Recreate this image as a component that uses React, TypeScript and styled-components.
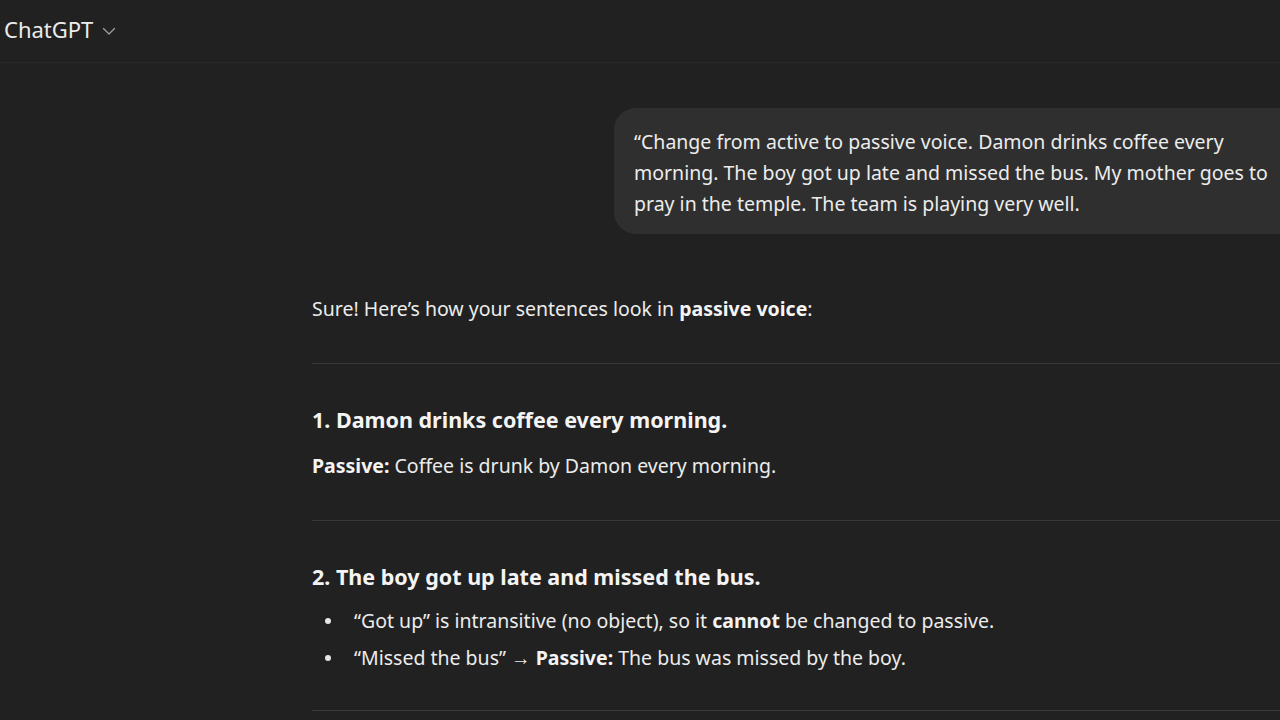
import styled, { createGlobalStyle } from 'styled-components'

const GlobalStyle = createGlobalStyle`
    html, body {
        margin: 0;
        padding: 0;
        background: #212121;
        overflow: hidden;
    }
    body {
        font-family: "Noto Sans", "Open Sans", sans-serif;
        color: #ececec;
    }
`

const Page = styled.div`
    width: 1280px;
    height: 720px;
    overflow: hidden;
    display: flex;
    flex-direction: column;
`
const Header = styled.div`
    height: 63px;
    flex-shrink: 0;
    display: flex;
    align-items: center;
    gap: 8px;
    padding: 0 4px;
    border-bottom: 1px solid #2a2a2a;
    box-sizing: border-box;
`
const Brand = styled.span`
    font-size: 22px;
    color: #ececec;
    margin-top: -4px;
`
const Chevron = styled.svg`
    width: 16px;
    height: 16px;
    margin-top: -1px;
    color: #a0a0a0;
`
const Thread = styled.div`
    width: 1000px;
    margin-left: 312px;
    padding-top: 45px;
    display: flex;
    flex-direction: column;
`
const UserRow = styled.div`
    display: flex;
    justify-content: flex-end;
    margin-bottom: 59px;
`
const Bubble = styled.div`
    max-width: 698px;
    box-sizing: border-box;
    background: #2f2f2f;
    border-radius: 22px;
    padding: 18px 20px 15px;
    font-size: 19.5px;
    line-height: 31px;
    color: #ececec;
`
const Para = styled.p<{ $gap?: number }>`
    margin: 0;
    font-size: 19.5px;
    line-height: 32px;
    color: #ececec;
    margin-bottom: ${p => p.$gap ?? 0}px;
`
const Strong = styled.b`
    font-weight: 700;
    color: #f4f4f4;
`
const Rule = styled.hr`
    border: none;
    height: 1px;
    background: #383838;
    margin: 0;
`
const Heading = styled.h3<{ $after?: number }>`
    margin: 40px 0 ${p => p.$after ?? 14}px;
    font-size: 21.5px;
    line-height: 32px;
    font-weight: 700;
    color: #f4f4f4;
`
const List = styled.ul`
    margin: 0 0 34px;
    padding: 0 0 0 42px;
    list-style: none;
`
const Item = styled.li`
    position: relative;
    font-size: 19.5px;
    line-height: 37px;
    color: #ececec;
    &::before {
        content: '';
        position: absolute;
        left: -29px;
        top: 16px;
        width: 6px;
        height: 6px;
        border-radius: 50%;
        background: #e6e6e6;
    }
`

export default function App() {
    return (
        <Page>
            <GlobalStyle />
            <Header>
                <Brand>ChatGPT</Brand>
                <Chevron viewBox="0 0 16 16" fill="none" stroke="currentColor" strokeWidth="1.3" strokeLinecap="round" strokeLinejoin="round">
                    <path d="M2.5 5.5l5.5 5.5 5.5-5.5" />
                </Chevron>
            </Header>
            <Thread>
                <UserRow>
                    <Bubble>
                        “Change from active to passive voice. Damon drinks coffee every morning. The boy got up late and missed the bus. My mother goes to pray in the temple. The team is playing very well.
                    </Bubble>
                </UserRow>
                <Para $gap={38}>Sure! Here’s how your sentences look in <Strong>passive voice</Strong>:</Para>
                <Rule />
                <Heading>1. Damon drinks coffee every morning.</Heading>
                <Para $gap={38}><Strong>Passive:</Strong> Coffee is drunk by Damon every morning.</Para>
                <Rule />
                <Heading $after={9}>2. The boy got up late and missed the bus.</Heading>
                <List>
                    <Item>“Got up” is intransitive (no object), so it <Strong>cannot</Strong> be changed to passive.</Item>
                    <Item>“Missed the bus” → <Strong>Passive:</Strong> The bus was missed by the boy.</Item>
                </List>
                <Rule />
            </Thread>
        </Page>
    )
}
